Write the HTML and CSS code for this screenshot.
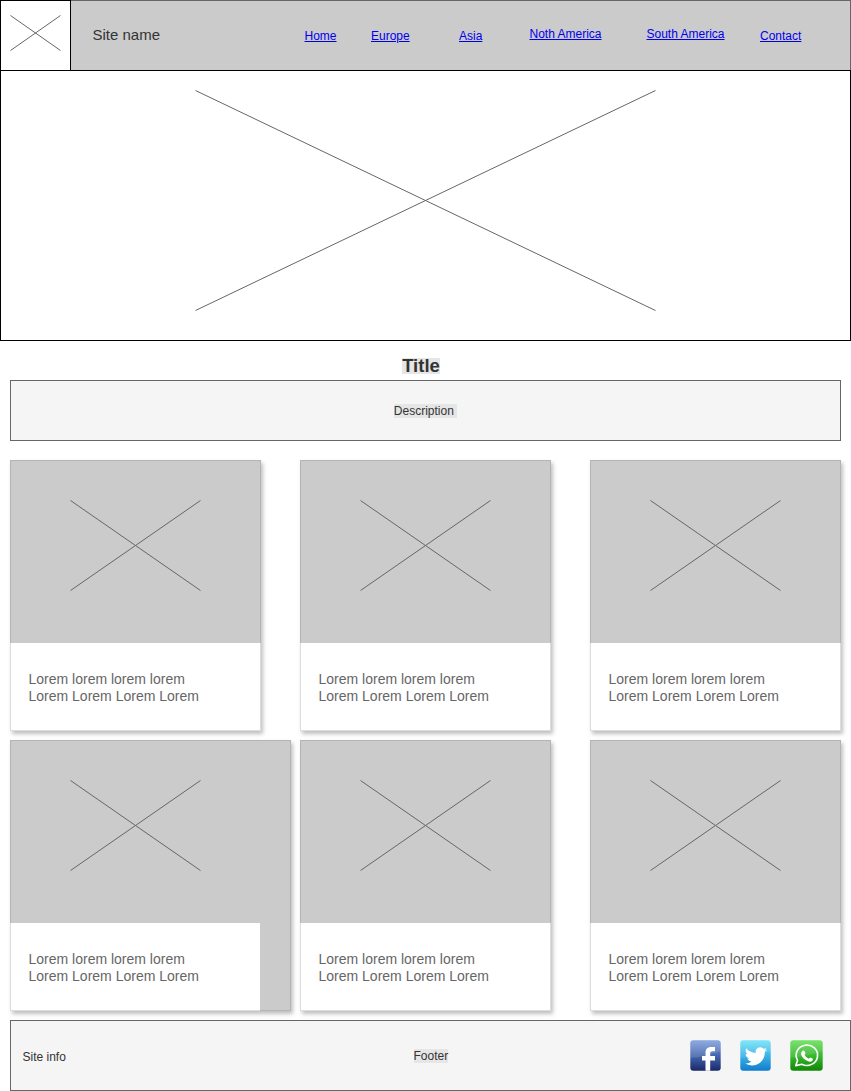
FILE: index.html
```
<!DOCTYPE html>
<html lang="en">
<head>
<meta charset="utf-8">
<title>Site name</title>
<link rel="stylesheet" href="styles.css">
</head>
<body>
<svg class="defs" aria-hidden="true">
  <symbol id="cross" viewBox="0 0 130 90" preserveAspectRatio="none" overflow="visible"><path d="M0 0 130 90M0 90 130 0" fill="none" stroke="#666" vector-effect="non-scaling-stroke"/></symbol>
</svg>
<header class="header">
  <div class="logo"><svg class="cross logo-cross"><use href="#cross"/></svg></div>
  <div class="bar">
    <span class="site-name">Site name</span>
    <nav class="nav">
      <a class="home" href="#">Home</a>
      <a class="europe" href="#">Europe</a>
      <a class="asia" href="#">Asia</a>
      <a class="north raised" href="#">Noth America</a>
      <a class="south raised" href="#">South America</a>
      <a class="contact" href="#">Contact</a>
    </nav>
  </div>
</header>
<section class="hero"><svg class="cross hero-cross"><use href="#cross"/></svg></section>
<main class="main">
  <h1 class="title"><span class="mark">Title</span></h1>
  <div class="description"><span class="mark">Description&nbsp;</span></div>
  <div class="cards">
    <article class="card"><div class="picture"><svg class="cross card-cross"><use href="#cross"/></svg></div><p class="text">Lorem lorem lorem lorem<br>Lorem Lorem Lorem Lorem</p></article>
    <article class="card"><div class="picture"><svg class="cross card-cross"><use href="#cross"/></svg></div><p class="text">Lorem lorem lorem lorem<br>Lorem Lorem Lorem Lorem</p></article>
    <article class="card"><div class="picture"><svg class="cross card-cross"><use href="#cross"/></svg></div><p class="text">Lorem lorem lorem lorem<br>Lorem Lorem Lorem Lorem</p></article>
    <article class="card wide"><div class="picture"><svg class="cross card-cross"><use href="#cross"/></svg></div><p class="text">Lorem lorem lorem lorem<br>Lorem Lorem Lorem Lorem</p></article>
    <article class="card"><div class="picture"><svg class="cross card-cross"><use href="#cross"/></svg></div><p class="text">Lorem lorem lorem lorem<br>Lorem Lorem Lorem Lorem</p></article>
    <article class="card"><div class="picture"><svg class="cross card-cross"><use href="#cross"/></svg></div><p class="text">Lorem lorem lorem lorem<br>Lorem Lorem Lorem Lorem</p></article>
  </div>
</main>
<footer class="footer">
  <span class="info">Site info</span>
  <span class="mark footer-label">Footer</span>
  <div class="social">
    <svg width="31" height="31" viewBox="0 0 31 31">
      <defs><linearGradient id="fb" x2="0" y2="1"><stop offset="0" stop-color="#7e9fdc"/><stop offset=".5" stop-color="#4667ad"/><stop offset="1" stop-color="#1a2869"/></linearGradient></defs>
      <rect x=".3" y=".3" width="30.4" height="30.4" rx="3" fill="url(#fb)"/>
      <path d="M.3 18Q14 17 30.7 11V3Q30.7 .3 28 .3H3Q.3 .3 .3 3Z" fill="#fff" opacity=".12"/>
      <path d="M15.5 30.7V20.5H12V16H15.5V13C15.5 9 17.5 7 21.3 7H25V11.3H22.6C20.8 11.3 20.2 12 20.2 13.5V16H25V20.5H20.2V30.7Z" fill="#fff"/>
    </svg>
    <svg width="31" height="31" viewBox="0 0 31 31">
      <defs><linearGradient id="tw" x2="0" y2="1"><stop offset="0" stop-color="#72e4fa"/><stop offset=".5" stop-color="#3cb3e6"/><stop offset="1" stop-color="#117dce"/></linearGradient></defs>
      <rect x=".3" y=".3" width="30.4" height="30.4" rx="3" fill="url(#tw)"/>
      <path d="M.3 18Q14 17 30.7 11V3Q30.7 .3 28 .3H3Q.3 .3 .3 3Z" fill="#fff" opacity=".1"/>
      <g transform="translate(4.8 5.2) scale(.93)"><path d="M23.95 4.57a10 10 0 0 1-2.82.77 4.96 4.96 0 0 0 2.16-2.72c-.95.55-2 .95-3.13 1.18a4.92 4.92 0 0 0-8.38 4.48C7.69 8.1 4.07 6.13 1.64 3.16a4.82 4.82 0 0 0-.67 2.48c0 1.71.87 3.21 2.19 4.1a4.9 4.9 0 0 1-2.23-.62v.06a4.92 4.92 0 0 0 3.95 4.83 5 5 0 0 1-2.21.08 4.94 4.94 0 0 0 4.6 3.42A9.87 9.87 0 0 1 0 19.54a13.99 13.99 0 0 0 7.56 2.21c9.05 0 14-7.5 14-13.98 0-.21 0-.42-.02-.63a9.94 9.94 0 0 0 2.41-2.57Z" fill="#fff"/></g>
    </svg>
    <svg width="33" height="31" viewBox="0 0 33 31">
      <defs><linearGradient id="wa" x2="0" y2="1"><stop offset="0" stop-color="#69df5b"/><stop offset=".5" stop-color="#3bb832"/><stop offset="1" stop-color="#108805"/></linearGradient></defs>
      <rect x=".3" y=".3" width="32.4" height="30.4" rx="3" fill="url(#wa)"/>
      <path d="M.3 18Q15 17 32.7 11V3Q32.7 .3 30 .3H3Q.3 .3 .3 3Z" fill="#fff" opacity=".1"/>
      <path d="M5.8 25.6 7.6 20.3A10.7 10.2 0 1 1 11.8 24.2Z" fill="none" stroke="#fff" stroke-width="1.6" stroke-linejoin="round"/>
      <path d="M13.2 10.5c.6-.2 1.1 0 1.3.5l.9 2.1c.2.6-.5 1.2-.9 1.7 1 1.9 2.4 3.1 4.4 3.9.5-.5.9-1.4 1.5-1.2l2.2 1.1c.6.4.2 1.6-.2 2.1-1.1 1.1-2.7 1.2-4.3.6-3.6-1.3-6.1-3.8-7-7-.4-1.6.9-3.5 2.1-3.8Z" fill="#fff"/>
    </svg>
  </div>
</footer>
</body>
</html>
```
FILE: styles.css
```
* { box-sizing: border-box; }
body {
  margin: 0;
  background: #fff;
  color: #333;
  font: 12px/14px "Liberation Sans", Arial, sans-serif;
}
svg { display: block; overflow: visible; }
.defs { position: absolute; width: 0; height: 0; }
.cross use { transform: translate(-.5px, -.5px); }
.header { display: flex; height: 70px; }
.logo {
  width: 71px;
  padding: 15px 0 0 10px;
  border: 1px solid #000;
  border-bottom: 0;
}
.logo-cross { width: 50px; height: 35px; }
.bar {
  flex: 1;
  display: flex;
  align-items: flex-start;
  background: #cbcbcb;
  border: 1px solid #666;
  border-width: 1px 1px 0 0;
}
.site-name { width: 233.5px; padding: 25px 0 0 21.5px; font-size: 15px; line-height: 18px; }
.nav { display: flex; padding-top: 28px; white-space: nowrap; }
.nav a { color: #00e; }
.nav .raised { margin-top: -2px; }
.home { width: 66.5px; }
.europe { width: 88px; }
.asia { width: 70.5px; }
.north { width: 117px; }
.south { width: 113.5px; }
.hero { height: 271px; padding: 20px 0 0 195px; border: 1px solid #000; }
.hero-cross { width: 460px; height: 220px; }
.main { padding: 0 10px; }
.title {
  height: 39px;
  margin: 0;
  padding: 14px 9px 0 0;
  font-size: 18.5px;
  line-height: 21px;
  text-align: center;
}
.mark { background: #e6e6e6; }
.title .mark { background: linear-gradient(#e6e6e6, #e6e6e6) 0 3px / 100% 16px no-repeat; }
.description {
  display: flex;
  align-items: center;
  justify-content: center;
  height: 61px;
  background: #f5f5f5;
  border: 1px solid #666;
}
.cards {
  display: grid;
  grid-template-columns: repeat(3, 251px);
  gap: 9px 39px;
  margin-top: 19px;
}
.card {
  height: 271px;
  background: linear-gradient(#cbcbcb 183px, #fff 183px) border-box;
  border: 1px solid rgba(102, 102, 102, .22);
  box-shadow: 2px 3px 4px rgba(0, 0, 0, .25);
}
.wide {
  width: 281px;
  background:
    linear-gradient(#fff, #fff) 0 183px / 250px 88px no-repeat border-box,
    #cbcbcb;
}
.picture { height: 182px; padding: 40px 0 0 60px; }
.card-cross { width: 130px; height: 90px; }
.text {
  width: 249px;
  height: 87px;
  margin: 0;
  padding: 28px 0 0 17.5px;
  background: #fff;
  color: #666;
  font-size: 14px;
  line-height: 17px;
}
.footer {
  display: grid;
  grid-template-columns: 391px 1fr auto;
  align-items: center;
  height: 71px;
  margin: 9px 0 0 10px;
  padding: 0 27px 0 11.5px;
  background: #f5f5f5;
  border: 1px solid #666;
}
.info { padding-top: 2px; }
.footer-label { justify-self: start; }
.social { display: flex; gap: 19px; }
```
